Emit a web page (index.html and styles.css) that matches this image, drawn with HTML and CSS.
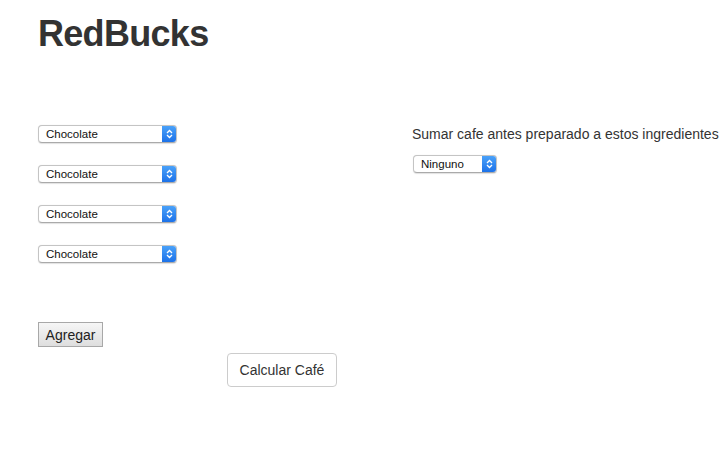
FILE: index.html
```html
<!DOCTYPE html>
<html>
<head>
<meta charset="utf-8">
<link rel="stylesheet" href="styles.css">
</head>
<body>
<div class="page">
  <h1 class="title">RedBucks</h1>
  <div class="row">
    <div class="col-left">
      <div class="sel sel-wide"><span class="sel-text">Chocolate</span><span class="sel-arrow"><svg width="7" height="10" viewBox="0 0 7 10"><path d="M1 4 L3.5 1.5 L6 4 M1 6 L3.5 8.5 L6 6" fill="none" stroke="#fff" stroke-width="1.3"/></svg></span></div>
      <div class="sel sel-wide"><span class="sel-text">Chocolate</span><span class="sel-arrow"><svg width="7" height="10" viewBox="0 0 7 10"><path d="M1 4 L3.5 1.5 L6 4 M1 6 L3.5 8.5 L6 6" fill="none" stroke="#fff" stroke-width="1.3"/></svg></span></div>
      <div class="sel sel-wide"><span class="sel-text">Chocolate</span><span class="sel-arrow"><svg width="7" height="10" viewBox="0 0 7 10"><path d="M1 4 L3.5 1.5 L6 4 M1 6 L3.5 8.5 L6 6" fill="none" stroke="#fff" stroke-width="1.3"/></svg></span></div>
      <div class="sel sel-wide"><span class="sel-text">Chocolate</span><span class="sel-arrow"><svg width="7" height="10" viewBox="0 0 7 10"><path d="M1 4 L3.5 1.5 L6 4 M1 6 L3.5 8.5 L6 6" fill="none" stroke="#fff" stroke-width="1.3"/></svg></span></div>
    </div>
    <div class="col-right">
      <p class="label">Sumar cafe antes preparado a estos ingredientes</p>
      <div class="sel sel-narrow"><span class="sel-text">Ninguno</span><span class="sel-arrow"><svg width="7" height="10" viewBox="0 0 7 10"><path d="M1 4 L3.5 1.5 L6 4 M1 6 L3.5 8.5 L6 6" fill="none" stroke="#fff" stroke-width="1.3"/></svg></span></div>
    </div>
  </div>
  <button class="btn-add">Agregar</button>
  <button class="btn-calc">Calcular Café</button>
</div>
</body>
</html>
```
FILE: styles.css
```css
html, body {
  margin: 0;
  padding: 0;
  background: #fff;
}
body {
  font-family: "Liberation Sans", Arial, sans-serif;
  color: #333;
  font-size: 14px;
  overflow: hidden;
}
.page {
  padding: 0 0 0 38px;
}
.title {
  margin: 0;
  padding-top: 14px;
  font-size: 36px;
  font-weight: bold;
  line-height: 40px;
  color: #333;
  letter-spacing: -0.7px;
}
.row {
  display: flex;
  margin-top: 71px;
}
.col-left {
  width: 374px;
  display: flex;
  flex-direction: column;
  gap: 22px;
}
.col-right {
  display: flex;
  flex-direction: column;
}
.label {
  margin: 0;
  font-size: 14px;
  line-height: 20px;
  color: #333;
  white-space: nowrap;
  position: relative;
  top: -1px;
}
.sel {
  display: flex;
  height: 18px;
  box-sizing: border-box;
  border: 1px solid #c4c4c4;
  border-bottom-color: #aaa;
  border-radius: 4px;
  background: #fff;
  box-shadow: 0 0.5px 1px rgba(0,0,0,0.12);
  overflow: hidden;
}
.sel-wide { width: 139px; }
.sel-narrow { width: 84px; margin-top: 10px; margin-left: 1px; }
.sel-text {
  flex: 1;
  font-size: 11.5px;
  line-height: 16px;
  padding-left: 7px;
  color: #111;
}
.sel-arrow {
  width: 15px;
  display: flex;
  align-items: center;
  justify-content: center;
  background: linear-gradient(#4ca4fa, #1a6fe8);
  margin: -1px -1px -1px 0;
}
.btn-add {
  display: block;
  margin-top: 59px;
  height: 25px;
  width: 65px;
  padding: 0;
  font-family: "Liberation Sans", Arial, sans-serif;
  font-size: 14px;
  color: #222;
  background: linear-gradient(#f6f6f6, #dedede);
  border: 1px solid #a8a8a8;
  border-radius: 0;
}
.btn-calc {
  display: block;
  margin-top: 6px;
  margin-left: 189px;
  height: 34px;
  width: 110px;
  padding: 0;
  font-family: "Liberation Sans", Arial, sans-serif;
  font-size: 14px;
  color: #333;
  background: #fff;
  border: 1px solid #ccc;
  border-radius: 4px;
}
```
